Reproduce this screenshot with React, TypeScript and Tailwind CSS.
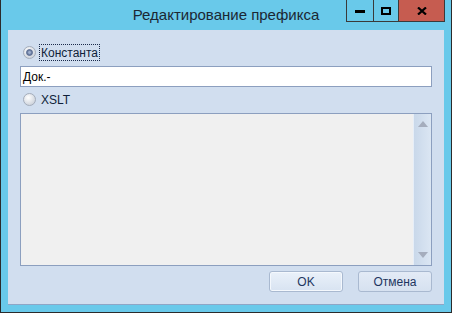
import React from "react";

function Radio({ checked }: { checked: boolean }) {
  return (
    <svg width="13" height="13" viewBox="0 0 13 13" className="shrink-0">
      <defs>
        <radialGradient id={checked ? "rg1" : "rg2"} cx="40%" cy="35%" r="70%">
          <stop offset="0%" stopColor="#ffffff" />
          <stop offset="100%" stopColor="#c9cfd8" />
        </radialGradient>
      </defs>
      <circle cx="6.5" cy="6.5" r="6" fill={`url(#${checked ? "rg1" : "rg2"})`} stroke="#a3acba" strokeWidth="1" />
      {checked && <circle cx="6.5" cy="6.5" r="3" fill="#6f80a3" stroke="#4e628a" strokeWidth="0.8" />}
      {checked && <circle cx="6.5" cy="6.5" r="1.4" fill="#9fb0d0" />}
    </svg>
  );
}

export default function App() {
  const font = { fontFamily: '"Liberation Sans", Arial, sans-serif' };
  return (
    <div
      className="w-[452px] h-[313px] bg-[#69c9ea] border-x border-b border-[#2b2b2b] flex flex-col"
      style={font}
    >
      <div className="relative h-[30px] shrink-0 flex items-center justify-center">
        <span className="text-[15px] text-[#1b2733] pt-[1px]">Редактирование префикса</span>
        <div className="absolute top-0 right-[6px] flex h-[22px] border border-t-0 border-[#3a3a3a]">
          <div className="w-[27px] h-full bg-[#69c9ea] border-r border-[#3a3a3a] flex items-center justify-center">
            <div className="w-[10px] h-[3px] bg-black mt-[2px]" />
          </div>
          <div className="w-[25px] h-full bg-[#69c9ea] border-r border-[#3a3a3a] flex items-center justify-center">
            <div className="w-[10px] h-[8px] border-2 border-black" />
          </div>
          <div className="w-[45px] h-full bg-[#c65c50] flex items-center justify-center">
            <svg width="10" height="8" viewBox="0 0 10 8">
              <path d="M1 0.5 L9 7.5 M9 0.5 L1 7.5" stroke="#000" strokeWidth="2.2" />
            </svg>
          </div>
        </div>
      </div>
      <div className="mx-[7px] h-[275px] bg-[#d1deef] border-b border-[#8ea6c6] flex flex-col text-[12px] text-[#0f1f3a]">
        <div className="h-[14px]" />
        <div className="flex items-center h-[17px] pl-[15px]">
          <Radio checked />
          <span className="ml-[3px] h-[17px] px-[1px] flex items-center border border-dotted border-[#1a2a4a]">Константа</span>
        </div>
        <div className="h-[5px]" />
        <div className="mx-3 h-[21px] bg-white border border-[#8c9fbf] flex items-center px-[2px] text-black">Док.-</div>
        <div className="h-[4px]" />
        <div className="flex items-center h-[17px] pl-[15px]">
          <Radio checked={false} />
          <span className="ml-[4px] px-[1px]">XSLT</span>
        </div>
        <div className="h-[5px]" />
        <div className="mx-3 h-[153px] bg-[#f0f0f0] border border-[#8c9fbf] flex justify-end">
          <div className="w-[18px] h-full bg-gradient-to-r from-[#c9d8ea] to-[#dbe6f3] border-l border-[#e6eef8] flex flex-col items-center justify-between py-[7px]">
            <svg width="10" height="6" viewBox="0 0 10 6"><path d="M0 6 L5 0 L10 6 Z" fill="#a5adbd" /></svg>
            <svg width="10" height="6" viewBox="0 0 10 6"><path d="M0 0 L10 0 L5 6 Z" fill="#a5adbd" /></svg>
          </div>
        </div>
        <div className="h-[5px]" />
        <div className="flex justify-end gap-[15px] pr-[12px]">
          <button className="w-[74px] h-[21px] rounded-[3px] border border-[#a9b9d0] bg-gradient-to-b from-[#eaf1fa] to-[#d8e3f1] text-[#1e3660] text-[12px] shadow-[inset_0_0_0_1px_#f4f8fd]">OK</button>
          <button className="w-[74px] h-[21px] rounded-[3px] border border-[#a9b9d0] bg-gradient-to-b from-[#e3ebf6] to-[#d6e1f0] text-[#1e3660] text-[12px]">Отмена</button>
        </div>
      </div>
    </div>
  );
}
